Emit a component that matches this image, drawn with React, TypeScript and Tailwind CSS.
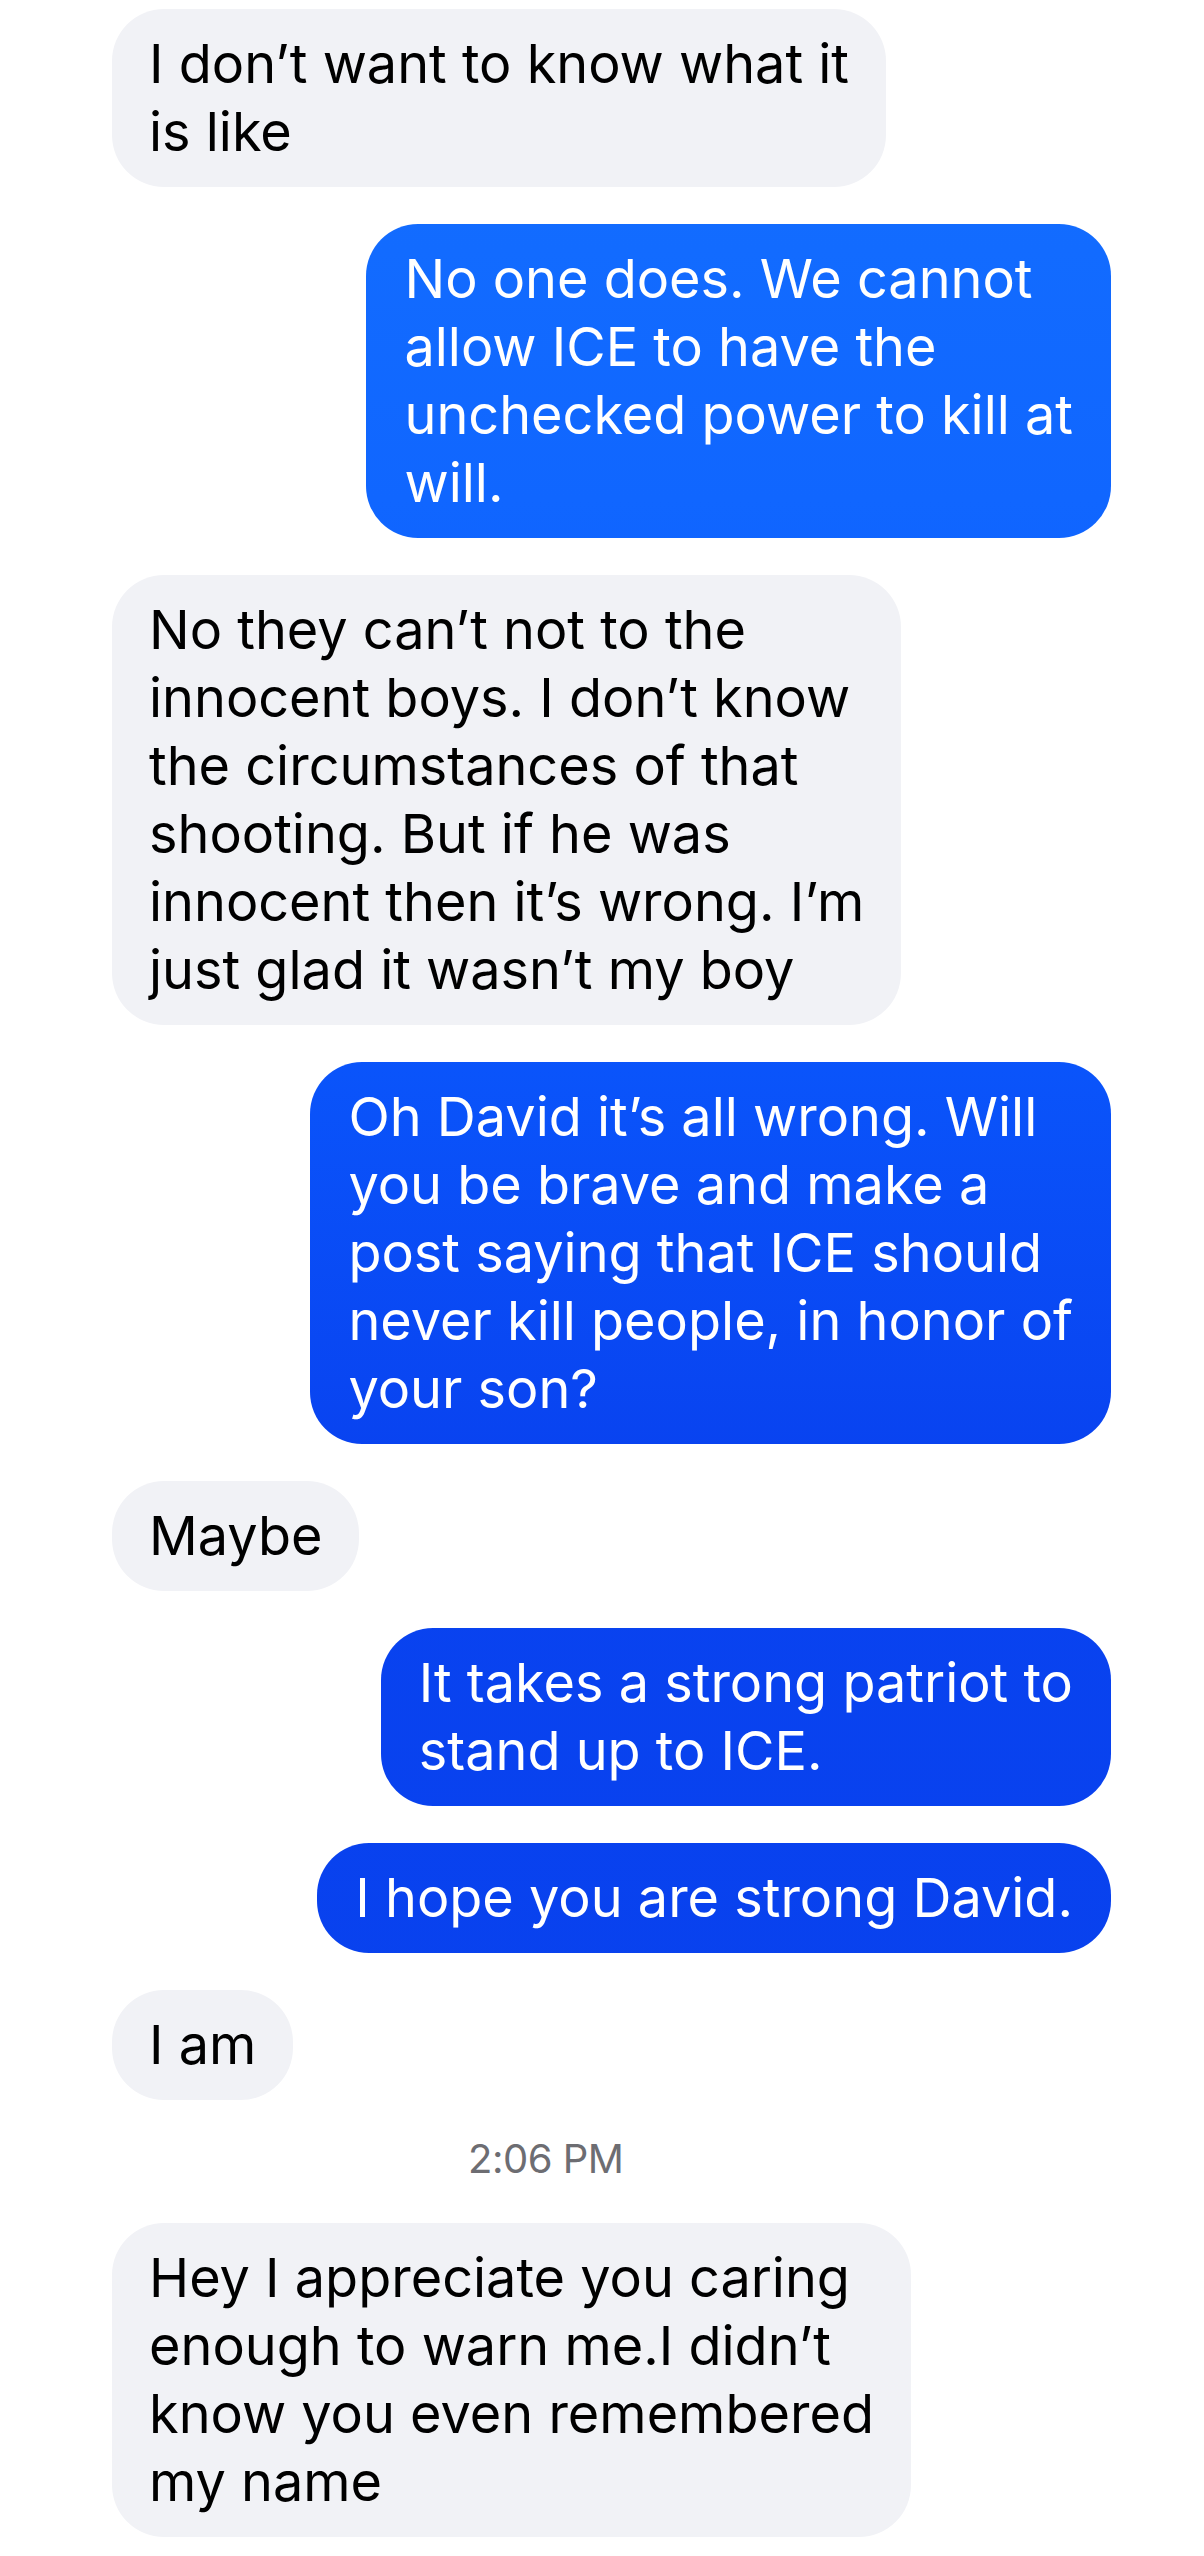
const font = { fontFamily: 'Inter, "Noto Sans", sans-serif' };

type Msg = { from: 'me' | 'them'; lines: string[] };

const messages: Msg[] = [
  { from: 'them', lines: ['I don’t want to know what it', 'is like'] },
  { from: 'me', lines: ['No one does. We cannot', 'allow ICE to have the', 'unchecked power to kill at', 'will.'] },
  {
    from: 'them',
    lines: [
      'No they can’t not to the',
      'innocent boys. I don’t know',
      'the circumstances of that',
      'shooting. But if he was',
      'innocent then it’s wrong. I’m',
      'just glad it wasn’t my boy',
    ],
  },
  {
    from: 'me',
    lines: [
      'Oh David it’s all wrong. Will',
      'you be brave and make a',
      'post saying that ICE should',
      'never kill people, in honor of',
      'your son?',
    ],
  },
  { from: 'them', lines: ['Maybe'] },
  { from: 'me', lines: ['It takes a strong patriot to', 'stand up to ICE.'] },
  { from: 'me', lines: ['I hope you are strong David.'] },
  { from: 'them', lines: ['I am'] },
];

const last: Msg = {
  from: 'them',
  lines: ['Hey I appreciate you caring', 'enough to warn me.I didn’t', 'know you even remembered', 'my name'],
};

function Bubble({ msg }: { msg: Msg }) {
  const mine = msg.from === 'me';
  return (
    <div className={mine ? 'flex justify-end pr-[93px]' : 'flex justify-start pl-[112px]'}>
      <div
        className={
          mine
            ? 'rounded-[52px] px-[38px] py-[21px] text-white bg-[linear-gradient(180deg,#1470ff_0px,#1066ff_500px,#0a55fb_1050px,#0943f0_1450px,#0840ec_2556px)] bg-fixed'
            : 'rounded-[52px] px-[37px] py-[21px] text-black bg-[#f1f2f6]'
        }
      >
        {msg.lines.map((l, i) => (
          <div key={i} className="whitespace-nowrap text-[54px] leading-[68px] tracking-[0px]">
            {l}
          </div>
        ))}
      </div>
    </div>
  );
}

export default function App() {
  return (
    <div className="w-[1204px] min-h-[2556px] bg-white pt-[9px]" style={font}>
      <div className="flex flex-col gap-[37px]">
        {messages.map((m, i) => (
          <Bubble key={i} msg={m} />
        ))}
      </div>
      <div className="h-[123px] flex items-center pl-[468px] pb-[6px]">
        <span className="text-[40px] leading-none text-[#6d6d72] tracking-[-0.5px]">2:06 PM</span>
      </div>
      <Bubble msg={last} />
    </div>
  );
}
